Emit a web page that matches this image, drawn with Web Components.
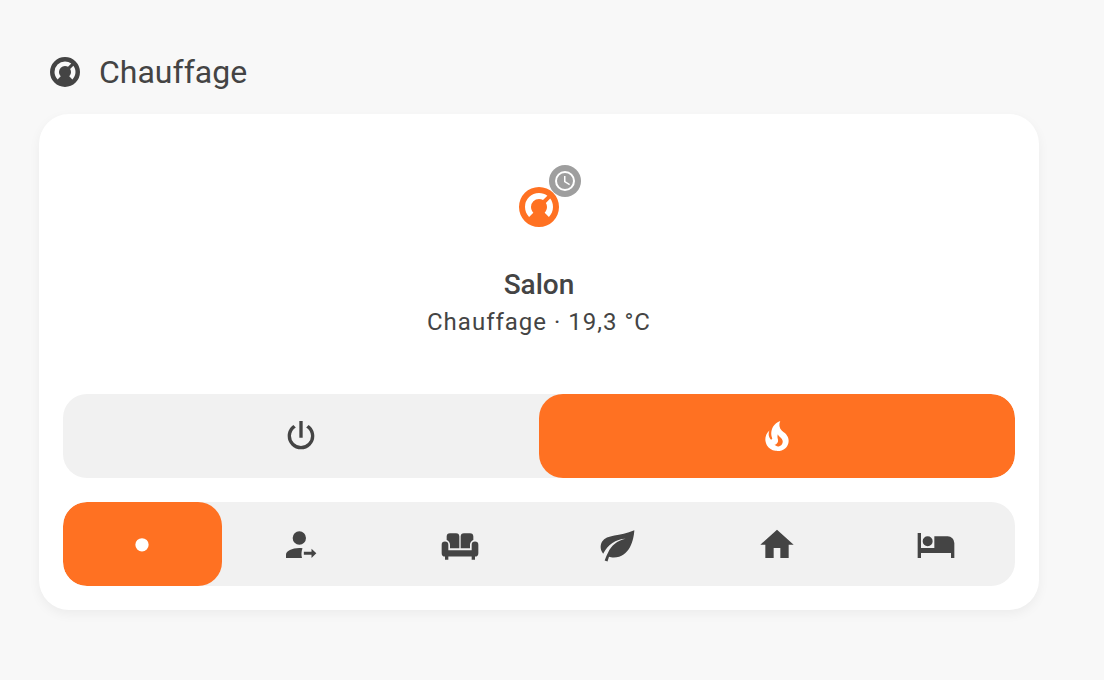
<!DOCTYPE html>
<html lang="fr">
<head>
<meta charset="utf-8">
<meta name="viewport" content="width=device-width, initial-scale=1">
<title>Chauffage</title>
<style>
    body {
        margin: 0;
        background: #f8f8f8;
        color: #444444;
        font-family: Roboto, "Liberation Sans", sans-serif;
        --card-background: #ffffff;
        --control-background: #f1f1f1;
        --accent-color: #ff7122;
        --badge-color: #9e9e9e;
    }
</style>
</head>
<body>
<heating-view>
    <section-title slot="title" icon="thermostat">Chauffage</section-title>
    <climate-card>
        <state-info icon="thermostat" badge="clock">
            Salon
            <span slot="secondary">Chauffage · 19,3 °C</span>
        </state-info>
        <control-group label="Mode">
            <control-button icon="power" label="Éteint"></control-button>
            <control-button icon="fire" label="Chauffage" active></control-button>
        </control-group>
        <control-group label="Préréglage">
            <control-button icon="dot" label="Aucun" active></control-button>
            <control-button icon="away" label="Absent"></control-button>
            <control-button icon="sofa" label="Confort"></control-button>
            <control-button icon="leaf" label="Éco"></control-button>
            <control-button icon="home" label="Maison"></control-button>
            <control-button icon="bed" label="Nuit"></control-button>
        </control-group>
    </climate-card>
</heating-view>

<script>
const ICONS = {
    thermostat: 'M16.95,16.95L14.83,14.83C15.55,14.1 16,13.1 16,12C16,11.26 15.79,10.57 15.43,10L17.6,7.81C18.5,9 19,10.43 19,12C19,13.93 18.22,15.68 16.95,16.95M12,5C13.57,5 15,5.5 16.19,6.4L14,8.56C13.43,8.21 12.74,8 12,8A4,4 0 0,0 8,12C8,13.1 8.45,14.1 9.17,14.83L7.05,16.95C5.78,15.68 5,13.93 5,12A7,7 0 0,1 12,5M12,2A10,10 0 0,0 2,12A10,10 0 0,0 12,22A10,10 0 0,0 22,12A10,10 0 0,0 12,2Z',
    clock: 'M12,20A8,8 0 0,0 20,12A8,8 0 0,0 12,4A8,8 0 0,0 4,12A8,8 0 0,0 12,20M12,2A10,10 0 0,1 22,12A10,10 0 0,1 12,22A10,10 0 0,1 2,12A10,10 0 0,1 12,2M12.5,7V12.25L17,14.92L16.25,16.15L11,13V7H12.5Z',
    power: 'M16.56,5.44L15.11,6.89C16.84,7.94 18,9.83 18,12A6,6 0 0,1 12,18A6,6 0 0,1 6,12C6,9.83 7.16,7.94 8.88,6.88L7.44,5.44C5.36,6.88 4,9.28 4,12A8,8 0 0,0 12,20A8,8 0 0,0 20,12C20,9.28 18.64,6.88 16.56,5.44M13,3H11V13H13Z',
    fire: 'M17.66,11.2C17.43,10.9 17.15,10.64 16.89,10.38C16.22,9.78 15.46,9.35 14.82,8.72C13.33,7.26 13,4.85 13.95,3C13,3.23 12.17,3.75 11.46,4.32C8.87,6.4 7.85,10.07 9.07,13.22C9.11,13.32 9.15,13.42 9.15,13.55C9.15,13.77 9,13.97 8.8,14.05C8.57,14.15 8.33,14.09 8.14,13.93C8.08,13.88 8.04,13.83 8,13.76C6.87,12.33 6.69,10.28 7.45,8.64C5.78,10 4.87,12.3 5,14.47C5.06,14.97 5.12,15.47 5.29,15.97C5.43,16.57 5.7,17.17 6,17.7C7.08,19.43 8.95,20.67 10.96,20.92C13.1,21.19 15.39,20.8 17.03,19.32C18.86,17.66 19.5,15 18.56,12.72L18.43,12.46C18.22,12 17.66,11.2 17.66,11.2M14.5,17.5C14.22,17.74 13.76,18 13.4,18.1C12.28,18.5 11.16,17.94 10.5,17.28C11.69,17 12.4,16.12 12.61,15.23C12.78,14.43 12.46,13.77 12.33,13C12.21,12.26 12.23,11.63 12.5,10.94C12.69,11.32 12.89,11.7 13.13,12C13.9,13 15.11,13.44 15.37,14.8C15.41,14.94 15.43,15.08 15.43,15.23C15.46,16.05 15.1,16.95 14.5,17.5Z',
    dot: 'M12,8.5A4,4 0 0,1 16,12.5A4,4 0 0,1 12,16.5A4,4 0 0,1 8,12.5A4,4 0 0,1 12,8.5Z',
    away: 'M11,4.4A4,4 0 0,1 15,8.4A4,4 0 0,1 11,12.4A4,4 0 0,1 7,8.4A4,4 0 0,1 11,4.4M11,14.4C11.7,14.4 12.3,14.4 12.9,14.5C12.2,16.4 12.1,18.6 12.6,20.4H3V18.4C3,16.2 6.6,14.4 11,14.4M18.3,20.4V18.5H13.7V16.6H18.3V14.8L21.2,17.6Z',
    sofa: 'M21,10.5A2,2 0 0,0 19,12.5V15.7H5V12.5A2,2 0 0,0 1,12.5V17.5A2,2 0 0,0 3,19.5V21.5H5V19.5H19V21.5H21V19.5A2,2 0 0,0 23,17.5V12.5A2,2 0 0,0 21,10.5M4,9.6V7.5A2,2 0 0,1 6,5.5H9.6A2,2 0 0,1 11.6,7.5V14.5H6V12.5C6,11.2 5.2,10.1 4,9.6M20,9.6V7.5A2,2 0 0,0 18,5.5H14.4A2,2 0 0,0 12.4,7.5V14.5H18V12.5C18,11.2 18.8,10.1 20,9.6Z',
    leaf: 'M3.1,17.8C1.5,15.8 1,13 2.5,10.5C5.2,6.2 13,7.6 21.8,3.8C21.5,9.5 19,20.1 9.5,20.1C8.3,20.1 7.3,19.9 6.6,19.6L5.7,22.5L4,21.9C4.8,20 5.2,18.6 6,17.2C8,13 11.5,10 16.6,8.9C10.5,9.1 6,12.5 3.1,17.8Z',
    home: 'M10,20.4V14.4H14V20.4H19V12.4H22L12,3.4L2,12.4H5V20.4H10Z',
    bed: 'M19,7.4H11V14.4H3V5.4H1V20.4H3V17.4H21V20.4H23V11.4A4,4 0 0,0 19,7.4M7,13.4A3,3 0 0,0 10,10.4A3,3 0 0,0 7,7.4A3,3 0 0,0 4,10.4A3,3 0 0,0 7,13.4Z'
};

// Icon on a 24x24 grid, sized by --icon-size
class UiIcon extends HTMLElement {
    constructor() {
        super();
        this.attachShadow({mode: 'open'});
    }

    connectedCallback() {
        this.shadowRoot.innerHTML = `
            <style>
                :host {
                    display: inline-flex;
                    width: var(--icon-size, 40px);
                    height: var(--icon-size, 40px);
                }

                svg {
                    width: 100%;
                    height: 100%;
                    fill: currentColor;
                }
            </style>
            <svg viewBox="0 0 24 24" aria-hidden="true"><path d="${ICONS[this.getAttribute('name')]}"/></svg>
        `;
    }
}

class HeatingView extends HTMLElement {
    constructor() {
        super();
        this.attachShadow({mode: 'open'});
        this.shadowRoot.innerHTML = `
            <style>
                :host {
                    display: block;
                    padding: 48px 65px 48px 39px;
                }

                main {
                    display: flex;
                    flex-direction: column;
                    gap: 18px;
                }
            </style>
            <main>
                <slot name="title"></slot>
                <slot></slot>
            </main>
        `;
    }
}

class SectionTitle extends HTMLElement {
    constructor() {
        super();
        this.attachShadow({mode: 'open'});
    }

    connectedCallback() {
        this.shadowRoot.innerHTML = `
            <style>
                :host {
                    display: block;
                    padding: 0 8px;
                    --icon-size: 36px;
                }

                h1 {
                    display: flex;
                    align-items: center;
                    gap: 16px;
                    margin: 0;
                    font-size: 32px;
                    font-weight: 400;
                    line-height: 48px;
                }
            </style>
            <h1>
                <ui-icon name="${this.getAttribute('icon')}"></ui-icon>
                <span><slot></slot></span>
            </h1>
        `;
    }
}

class ClimateCard extends HTMLElement {
    constructor() {
        super();
        this.attachShadow({mode: 'open'});
        this.shadowRoot.innerHTML = `
            <style>
                :host {
                    display: flex;
                    flex-direction: column;
                    gap: 24px;
                    padding: 24px;
                    border-radius: 30px;
                    background: var(--card-background);
                    box-shadow: 0 4px 12px rgba(0, 0, 0, 0.05);
                }
            </style>
            <slot></slot>
        `;
    }
}

class StateInfo extends HTMLElement {
    constructor() {
        super();
        this.attachShadow({mode: 'open'});
    }

    connectedCallback() {
        this.shadowRoot.innerHTML = `
            <style>
                :host {
                    display: flex;
                    flex-direction: column;
                    align-items: center;
                    gap: 16px;
                    padding: 27px 0 31px;
                    text-align: center;
                }

                .shape {
                    position: relative;
                    display: flex;
                    align-items: center;
                    justify-content: center;
                    width: 84px;
                    height: 84px;
                    color: var(--accent-color);
                    --icon-size: 48px;
                }

                .badge {
                    position: absolute;
                    top: 0;
                    right: 0;
                    display: flex;
                    align-items: center;
                    justify-content: center;
                    width: 32px;
                    height: 32px;
                    border-radius: 50%;
                    background: var(--badge-color);
                    color: #ffffff;
                    --icon-size: 24px;
                }

                .primary {
                    font-size: 28px;
                    font-weight: 500;
                    line-height: 40px;
                }

                .secondary {
                    font-size: 24px;
                    line-height: 34px;
                    letter-spacing: 1px;
                }
            </style>
            <div class="shape">
                <ui-icon name="${this.getAttribute('icon')}"></ui-icon>
                <div class="badge"><ui-icon name="${this.getAttribute('badge')}"></ui-icon></div>
            </div>
            <div>
                <div class="primary"><slot></slot></div>
                <div class="secondary"><slot name="secondary"></slot></div>
            </div>
        `;
    }
}

class ControlGroup extends HTMLElement {
    constructor() {
        super();
        this.attachShadow({mode: 'open'});
        this.shadowRoot.innerHTML = `
            <style>
                :host {
                    display: block;
                }

                .group {
                    display: flex;
                    border-radius: 24px;
                    background: var(--control-background);
                    overflow: hidden;
                }
            </style>
            <div class="group" role="group"><slot></slot></div>
        `;
    }

    connectedCallback() {
        this.shadowRoot.querySelector('.group').setAttribute('aria-label', this.getAttribute('label'));
        this.addEventListener('click', (event) => {
            const selected = event.target.closest('control-button');
            if (!selected) {
                return;
            }
            this.querySelectorAll('control-button').forEach((button) => {
                button.toggleAttribute('active', button === selected);
            });
        });
    }
}

class ControlButton extends HTMLElement {
    constructor() {
        super();
        this.attachShadow({mode: 'open'});
    }

    static get observedAttributes() {
        return ['active'];
    }

    connectedCallback() {
        this.shadowRoot.innerHTML = `
            <style>
                :host {
                    display: flex;
                    flex: 1;
                    min-width: 0;
                }

                button {
                    display: flex;
                    flex: 1;
                    align-items: center;
                    justify-content: center;
                    height: 84px;
                    padding: 0;
                    border: none;
                    border-radius: 24px;
                    background: none;
                    color: inherit;
                    cursor: pointer;
                }

                :host([active]) button {
                    background: var(--accent-color);
                    color: #ffffff;
                }
            </style>
            <button type="button" aria-label="${this.getAttribute('label')}">
                <ui-icon name="${this.getAttribute('icon')}"></ui-icon>
            </button>
        `;
        this.updatePressed();
    }

    attributeChangedCallback() {
        this.updatePressed();
    }

    updatePressed() {
        const button = this.shadowRoot.querySelector('button');
        if (button) {
            button.setAttribute('aria-pressed', this.hasAttribute('active'));
        }
    }
}

customElements.define('ui-icon', UiIcon);
customElements.define('heating-view', HeatingView);
customElements.define('section-title', SectionTitle);
customElements.define('climate-card', ClimateCard);
customElements.define('state-info', StateInfo);
customElements.define('control-group', ControlGroup);
customElements.define('control-button', ControlButton);
</script>
</body>
</html>
